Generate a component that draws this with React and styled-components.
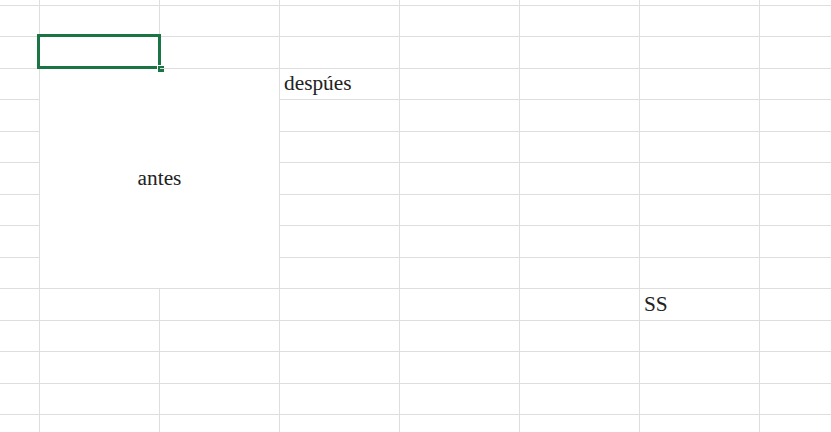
import React from 'react';
import styled, { createGlobalStyle } from 'styled-components';

const GlobalStyle = createGlobalStyle`
  html, body {
    margin: 0;
    padding: 0;
    background: #ffffff;
    overflow: hidden;
  }
`;

const COLS = [40, 120, 120, 120, 120, 120, 120, 120];
const ROWS = [6, 31, 32, 31, 32, 31, 32, 31, 32, 31, 32, 31, 32, 31, 40];

// merged block B4:C10 in grid coordinates (1-based)
const MERGE = { col: 2, colEnd: 4, row: 4, rowEnd: 11 };

const CONTENT = {
  '4-4': 'despúes',
  '11-7': 'SS',
};

const Sheet = styled.div`
  display: grid;
  grid-template-columns: ${COLS.map((c) => `${c}px`).join(' ')};
  grid-template-rows: ${ROWS.map((r) => `${r}px`).join(' ')};
  width: 831px;
  height: 432px;
  overflow: hidden;
  font-family: 'Liberation Serif', 'Times New Roman', serif;
  font-size: 21.33px;
  color: #222;
`;

const Cell = styled.div`
  box-sizing: border-box;
  position: relative;
  border-right: 1px solid #dedede;
  border-bottom: 1px solid #dedede;
  display: flex;
  align-items: ${(p) => (p.$center ? 'center' : 'flex-end')};
  justify-content: ${(p) => (p.$center ? 'center' : 'flex-start')};
  padding: ${(p) => (p.$center ? '0' : '0 0 3px 4px')};
  white-space: nowrap;
  line-height: 1.15;
`;

const Selection = styled.div`
  position: absolute;
  top: -3px;
  left: -3px;
  right: -2px;
  bottom: -1px;
  border: 3px solid #1a7443;
  pointer-events: none;
`;

const FillHandle = styled.div`
  position: absolute;
  left: 118px;
  top: 29px;
  width: 6px;
  height: 6px;
  background: #1a7443;
  box-shadow: -1px -1px 0 0 #ffffff;
`;

const inMerge = (r, c) =>
  r >= MERGE.row && r < MERGE.rowEnd && c >= MERGE.col && c < MERGE.colEnd;

export default function App() {
  const cells = [];
  ROWS.forEach((_, ri) => {
    COLS.forEach((__, ci) => {
      const r = ri + 1;
      const c = ci + 1;
      if (inMerge(r, c)) {
        if (r === MERGE.row && c === MERGE.col) {
          cells.push(
            <Cell
              key="merge"
              $center
              style={{
                gridColumn: `${MERGE.col} / ${MERGE.colEnd}`,
                gridRow: `${MERGE.row} / ${MERGE.rowEnd}`,
              }}
            >
              antes
            </Cell>
          );
        }
        return;
      }
      const active = r === 3 && c === 2;
      cells.push(
        <Cell key={`${r}-${c}`} style={{ gridColumn: c, gridRow: r }}>
          {CONTENT[`${r}-${c}`]}
          {active && (
            <>
              <Selection />
              <FillHandle />
            </>
          )}
        </Cell>
      );
    });
  });

  return (
    <>
      <GlobalStyle />
      <Sheet>{cells}</Sheet>
    </>
  );
}
